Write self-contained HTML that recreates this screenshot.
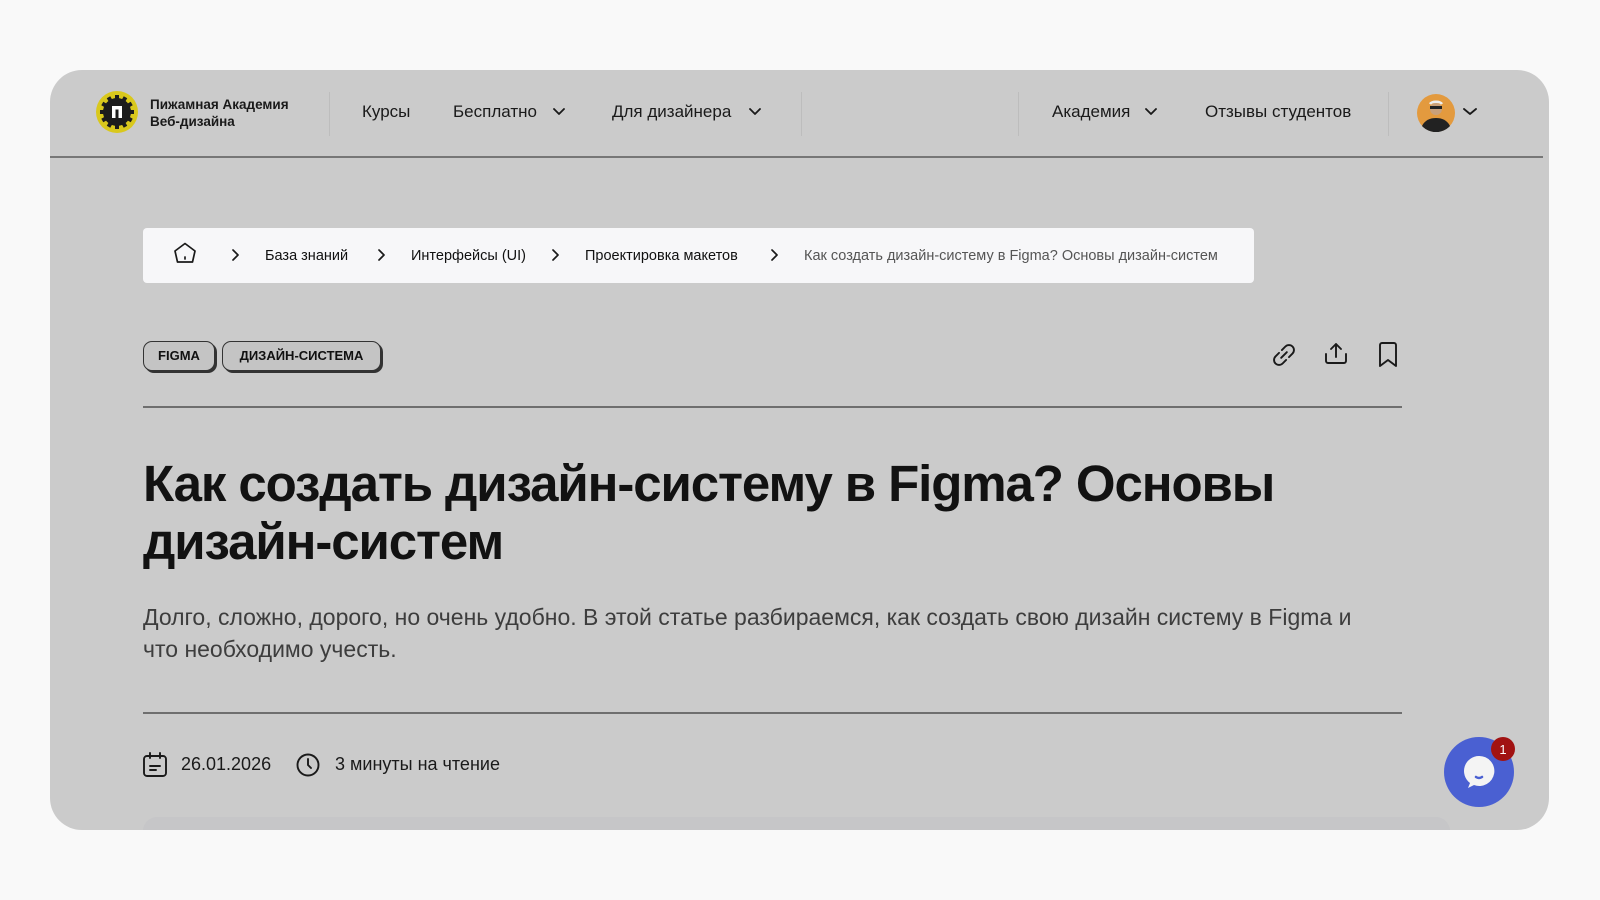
<!DOCTYPE html>
<html><head><meta charset="utf-8"><style>
*{margin:0;padding:0;box-sizing:border-box}
body{width:1600px;height:900px;background:#f9f9f9;font-family:"Liberation Sans",sans-serif;color:#111;position:relative;overflow:hidden}
.a{position:absolute;white-space:nowrap}
.card{position:absolute;left:50px;top:70px;width:1499px;height:760px;background:#cbcbcb;border-radius:32px;overflow:hidden}
.vd{position:absolute;top:92px;width:1px;height:44px;background:#bdbdbd}
.nav{font-size:17px;color:#1a1a1a;top:102px}
.bc{font-size:14.5px;color:#111;top:248px}
.tag{position:absolute;top:341px;height:30px;border:1.5px solid #333;border-radius:9px;box-shadow:2px 2px 0 #333;background:#c4c4c4;font-size:13px;font-weight:bold;line-height:27px;text-align:center}
.hl{position:absolute;left:143px;width:1259px;height:1.5px;background:#6f6f6f}
</style></head><body>
<div class="card">
  <div style="position:absolute;left:0;top:86px;width:1493px;height:1.5px;background:#777"></div>
  <div style="position:absolute;left:93px;top:747px;width:1307px;height:30px;background:#c6c6c8;border-radius:14px"></div>
</div>
<!-- logo -->
<svg class="a" style="left:96px;top:91px" width="42" height="42" viewBox="0 0 42 42">
<circle cx="21" cy="21" r="21" fill="#d9c81c"/>
<g fill="#1c1c1c"><circle cx="21" cy="21" r="14"/>
<g id="t"><rect x="19" y="4" width="4" height="5"/></g>
<use href="#t" transform="rotate(30 21 21)"/><use href="#t" transform="rotate(60 21 21)"/><use href="#t" transform="rotate(90 21 21)"/><use href="#t" transform="rotate(120 21 21)"/><use href="#t" transform="rotate(150 21 21)"/><use href="#t" transform="rotate(180 21 21)"/><use href="#t" transform="rotate(210 21 21)"/><use href="#t" transform="rotate(240 21 21)"/><use href="#t" transform="rotate(270 21 21)"/><use href="#t" transform="rotate(300 21 21)"/><use href="#t" transform="rotate(330 21 21)"/></g>
<path d="M16 27V15h10v12h-3.5v-8.5h-3V27z" fill="#fff"/>
</svg>
<div class="a" style="left:150px;top:96px;font-size:13.5px;font-weight:bold;line-height:17px;color:#1a1a1a">Пижамная Академия<br>Веб-дизайна</div>
<div class="vd" style="left:329px"></div><div class="vd" style="left:801px"></div><div class="vd" style="left:1018px"></div><div class="vd" style="left:1388px"></div>
<div class="a nav" style="left:362px">Курсы</div>
<div class="a nav" style="left:453px">Бесплатно</div>
<div class="a nav" style="left:612px">Для дизайнера</div>
<div class="a nav" style="left:1052px">Академия</div>
<div class="a nav" style="left:1205px">Отзывы студентов</div>
<svg class="a" style="left:0;top:0" width="1600" height="900" fill="none" stroke="#1a1a1a" stroke-width="1.8" stroke-linecap="round" stroke-linejoin="round">
<path d="M554 109l5 5 5-5M750 109l5 5 5-5M1146 109l5 5 5-5M1464 109l6 5 6-5"/>
</svg>
<svg class="a" style="left:1417px;top:94px" width="38" height="38" viewBox="0 0 38 38"><circle cx="19" cy="19" r="19" fill="#e39a3e"/><path d="M5 32c3-6 8-8 14-8s11 2 14 8a19 19 0 0 1-28 0z" fill="#222"/><circle cx="19" cy="15" r="6" fill="#c9a07a"/><rect x="13" y="12" width="12" height="3" fill="#222"/><path d="M13 10c2-3 10-3 12 0" stroke="#eee" stroke-width="2.5" fill="none"/></svg>
<!-- breadcrumb -->
<div style="position:absolute;left:143px;top:228px;width:1111px;height:55px;background:#f7f7f9;border-radius:4px"></div>
<svg class="a" style="left:0;top:0" width="1600" height="900" fill="none" stroke="#1a1a1a" stroke-width="1.7" stroke-linecap="round" stroke-linejoin="round">
<path d="M175 251l10-7.5 10 7.5-2.5 11h-15z"/><path d="M185 257v2"/>
<path d="M233 250l5 5-5 5M379 250l5 5-5 5M553 250l5 5-5 5M772 250l5 5-5 5"/>
</svg>
<div class="a bc" style="left:265px">База знаний</div>
<div class="a bc" style="left:411px">Интерфейсы (UI)</div>
<div class="a bc" style="left:585px">Проектировка макетов</div>
<div class="a bc" style="left:804px;color:#555">Как создать дизайн-систему в Figma? Основы дизайн-систем</div>
<div class="tag" style="left:143px;width:72px">FIGMA</div>
<div class="tag" style="left:222px;width:159px">ДИЗАЙН-СИСТЕМА</div>
<svg class="a" style="left:0;top:0" width="1600" height="900" fill="none" stroke="#1a1a1a" stroke-width="1.9" stroke-linecap="round" stroke-linejoin="round">
<g transform="rotate(-45 1284 355)"><path d="M1282 350h-5a5 5 0 0 0 0 10h5M1286 350h5a5 5 0 0 1 0 10h-5M1280 355h8"/></g>
<path d="M1336 357v-13M1331 349l5-5 5 5M1326 354v7a2 2 0 0 0 2 2h16a2 2 0 0 0 2-2v-7"/>
<path d="M1380 345a2 2 0 0 1 2-2h12a2 2 0 0 1 2 2v21l-8-6-8 6z"/>
<rect x="144" y="756" width="22" height="20" rx="3"/><path d="M150 753v5M160 753v5M150 766h10M150 770h6"/>
<circle cx="308" cy="765" r="10.5"/><path d="M308 759v6l3 3"/>
</svg>
<div class="hl" style="top:406px"></div>
<div class="a" style="left:143px;top:455px;font-size:51px;font-weight:bold;line-height:58px;letter-spacing:-1.1px;color:#121212;white-space:normal;width:1270px">Как создать дизайн-систему в Figma? Основы дизайн-систем</div>
<div class="a" style="left:143px;top:601px;font-size:23px;line-height:32px;color:#3d3d3d;white-space:normal;width:1240px">Долго, сложно, дорого, но очень удобно. В этой статье разбираемся, как создать свою дизайн систему в Figma и что необходимо учесть.</div>
<div class="hl" style="top:712px"></div>
<div class="a" style="left:181px;top:754px;font-size:18px;color:#1a1a1a">26.01.2026</div>
<div class="a" style="left:335px;top:754px;font-size:18px;color:#1a1a1a">3 минуты на чтение</div>
<!-- chat -->
<svg class="a" style="left:1440px;top:732px" width="80" height="80" viewBox="0 0 80 80">
<circle cx="39" cy="40" r="35" fill="#4a60d2"/>
<path d="M39 24a15 15 0 1 1 -5 29l-6 3 2-5a15 15 0 0 1 9-27z" fill="#f4f4f4"/>
<path d="M36 45q3 2 6 0" stroke="#4a60d2" stroke-width="2.5" fill="none" stroke-linecap="round"/>
<circle cx="63" cy="17" r="12" fill="#a11212"/>
<text x="63" y="22" font-size="13" fill="#fff" text-anchor="middle" font-family="Liberation Sans">1</text>
</svg>
</body></html>
